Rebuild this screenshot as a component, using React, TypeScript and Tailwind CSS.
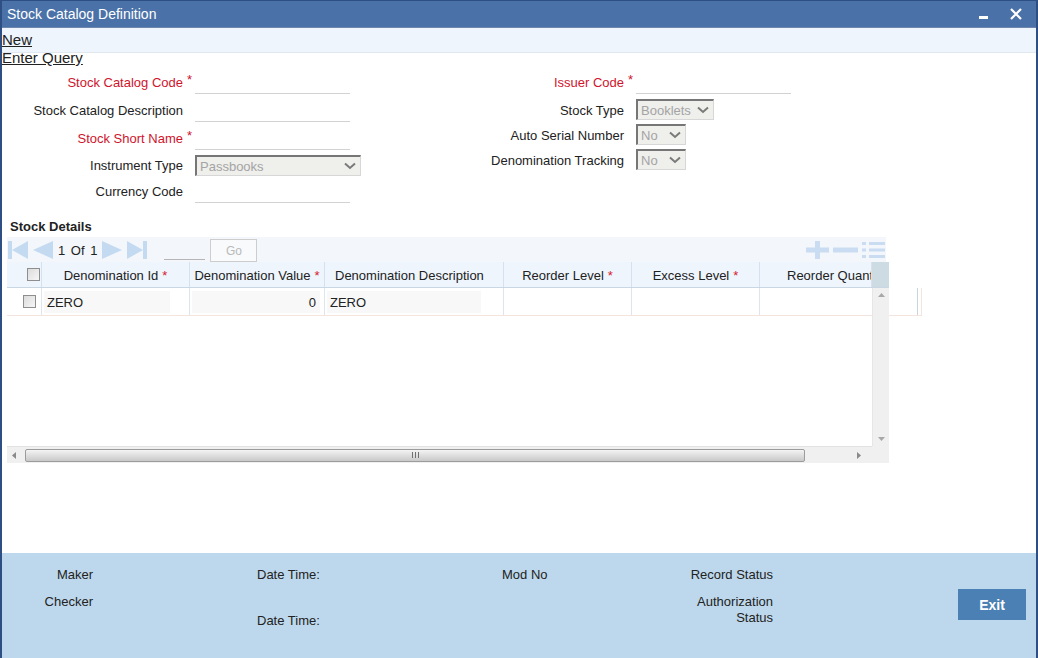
import React from 'react';

const RED = 'text-[#d0142c]';

function Star() {
  return <span className={`${RED} text-[13px] leading-none mb-[5px]`}>*</span>;
}

function Underline({ w }: { w: string }) {
  return <div className={`${w} h-[24px] border-b border-[#d2d2d2]`} />;
}

function FakeSelect({ w, value }: { w: string; value: string }) {
  return (
    <div
      className={`${w} h-[21px] flex items-center justify-between bg-[#efefec] border-t-2 border-l-2 border-t-[#767676] border-l-[#767676] border-b border-r border-b-[#d7d7d7] border-r-[#d7d7d7] pl-[3px] pr-[4px]`}
    >
      <span className="text-[13px] text-[#a4a4a4] leading-none pt-[1px]">{value}</span>
      <svg width="12" height="8" viewBox="0 0 12 8">
        <path d="M1 1.5 L6 6 L11 1.5" fill="none" stroke="#7a7a7a" strokeWidth="2" />
      </svg>
    </div>
  );
}

function Row({
  label,
  req,
  h,
  labelW,
  children,
}: {
  label: string;
  req?: boolean;
  h: string;
  labelW: string;
  children?: React.ReactNode;
}) {
  return (
    <div className={`flex items-center ${h}`}>
      <div className={`${labelW} text-right text-[13px] pt-[2px] ${req ? RED : 'text-[#222]'}`}>{label}</div>
      <div className="w-[12px] flex pl-[4px]">{req && <Star />}</div>
      {children}
    </div>
  );
}

function Checkbox() {
  return (
    <div className="w-[13px] h-[13px] border border-[#8e8e8e] bg-gradient-to-br from-[#dcdcdc] to-[#f6f6f6]" />
  );
}

function HeadCell({
  w,
  label,
  req,
  inner,
  align,
}: {
  w: string;
  label: string;
  req?: boolean;
  inner?: string;
  align?: string;
}) {
  return (
    <div className={`${w} h-full border-r border-[#d5e1ee] overflow-hidden flex items-center pt-[2px]`}>
      <div className={`${inner ?? 'w-full'} shrink-0 ${align ?? 'text-center'} whitespace-nowrap text-[13px] text-[#222]`}>
        {label}
        {req && <span className="text-[#d6202b] ml-[4px]">*</span>}
      </div>
    </div>
  );
}

function Tri({ dir }: { dir: 'l' | 'r' }) {
  return (
    <svg width="20" height="18" viewBox="0 0 20 18">
      {dir === 'l' ? <path d="M20 0 L0 9 L20 18 Z" fill="#c4daf1" /> : <path d="M0 0 L20 9 L0 18 Z" fill="#c4daf1" />}
    </svg>
  );
}

export default function App() {
  return (
    <div
      className="w-[1038px] h-[658px] flex flex-col bg-white border-x-2 border-[#2e4f84] overflow-hidden text-[#222]"
      style={{ fontFamily: '"Liberation Sans", Arial, sans-serif' }}
    >
      {/* title bar */}
      <div className="h-[28px] shrink-0 bg-[#4a72a8] border-t border-[#2e4f84] border-b border-b-[#6e88ad] flex items-center justify-between pl-[5px] pr-[14px]">
        <span className="text-white text-[14px]">Stock Catalog Definition</span>
        <div className="flex items-center gap-[22px]">
          <div className="w-[9px] h-[3px] bg-white mt-[6px]" />
          <svg width="12" height="12" viewBox="0 0 12 12">
            <path d="M1 1 L11 11 M11 1 L1 11" stroke="white" strokeWidth="2.2" />
          </svg>
        </div>
      </div>

      {/* toolbar */}
      <div className="h-[25px] shrink-0 bg-[#eef5fd] border-b border-[#e1e7ee]">
        <div className="pt-[3px] text-[15px] leading-[18px] underline">New</div>
      </div>
      <div className="-mt-[4px] text-[15px] leading-[18px] underline w-fit">Enter Query</div>

      {/* form */}
      <div className="flex pt-[1px]">
        <div className="w-[398px]">
          <Row label="Stock Catalog Code" req h="h-[28px]" labelW="w-[181px]">
            <Underline w="w-[155px]" />
          </Row>
          <Row label="Stock Catalog Description" h="h-[28px]" labelW="w-[181px]">
            <Underline w="w-[155px]" />
          </Row>
          <Row label="Stock Short Name" req h="h-[28px]" labelW="w-[181px]">
            <Underline w="w-[155px]" />
          </Row>
          <Row label="Instrument Type" h="h-[26px]" labelW="w-[181px]">
            <FakeSelect w="w-[166px]" value="Passbooks" />
          </Row>
          <Row label="Currency Code" h="h-[26px]" labelW="w-[181px]">
            <Underline w="w-[155px]" />
          </Row>
        </div>
        <div>
          <Row label="Issuer Code" req h="h-[28px]" labelW="w-[224px]">
            <Underline w="w-[155px]" />
          </Row>
          <div className="h-[1px]" />
          <Row label="Stock Type" h="h-[25px]" labelW="w-[224px]">
            <FakeSelect w="w-[78px]" value="Booklets" />
          </Row>
          <Row label="Auto Serial Number" h="h-[25px]" labelW="w-[224px]">
            <FakeSelect w="w-[50px]" value="No" />
          </Row>
          <Row label="Denomination Tracking" h="h-[25px]" labelW="w-[224px]">
            <FakeSelect w="w-[50px]" value="No" />
          </Row>
        </div>
      </div>

      {/* stock details */}
      <div className="mt-[15px] pl-[8px] text-[13px] font-bold leading-[16px]">Stock Details</div>

      <div className="mt-[2px] ml-[5px] w-[879px] h-[25px] bg-[#f3f7fc] flex items-center">
        <div className="ml-[1px] flex items-center">
          <div className="w-[4px] h-[18px] bg-[#c4daf1]" />
          <svg width="16" height="18" viewBox="0 0 16 18">
            <path d="M16 0 L0 9 L16 18 Z" fill="#c4daf1" />
          </svg>
        </div>
        <div className="ml-[5px]">
          <Tri dir="l" />
        </div>
        <span className="ml-[5px] text-[13px] pt-[3px] [word-spacing:2px]">1 Of 1</span>
        <div className="ml-[5px]">
          <Tri dir="r" />
        </div>
        <div className="ml-[5px] flex items-center">
          <svg width="16" height="18" viewBox="0 0 16 18">
            <path d="M0 0 L16 9 L0 18 Z" fill="#c4daf1" />
          </svg>
          <div className="w-[4px] h-[18px] bg-[#c4daf1]" />
        </div>
        <div className="ml-[17px] w-[41px] h-[22px] border-b border-[#b5b5b5] self-end mb-[2px]" />
        <div className="ml-[5px] w-[47px] h-[23px] self-end border border-[#cdcdcd] bg-[#f8fafc] flex items-center justify-center text-[12px] text-[#b9b9b9]">
          Go
        </div>
        <div className="ml-auto mr-[1px] flex items-center gap-[4px]">
          <svg width="23" height="18" viewBox="0 0 23 18">
            <path d="M0 6.5 H23 V11.5 H0 Z M9 0 H14 V18 H9 Z" fill="#c9dcf1" />
          </svg>
          <svg width="25" height="18" viewBox="0 0 25 18">
            <path d="M0 6.5 H25 V11.5 H0 Z" fill="#c9dcf1" />
          </svg>
          <svg width="23" height="18" viewBox="0 0 23 18">
            <g fill="#c9dcf1">
              <rect x="0" y="1" width="4" height="3" />
              <rect x="0" y="7.5" width="4" height="3" />
              <rect x="0" y="14" width="4" height="3" />
              <rect x="7" y="1" width="16" height="3" />
              <rect x="7" y="7.5" width="16" height="3" />
              <rect x="7" y="14" width="16" height="3" />
            </g>
          </svg>
        </div>
      </div>

      {/* grid */}
      <div className="ml-[5px] flex">
        <div className="w-[882px]">
          <div className="h-[26px] flex bg-[#eef5fd] border-b border-[#c9d6e4]">
            <div className="w-[35px] h-full border-r border-[#d5e1ee] flex items-center pl-[20px]">
              <Checkbox />
            </div>
            <HeadCell w="w-[148px]" label="Denomination Id" req />
            <HeadCell w="w-[135px]" label="Denomination Value" req />
            <HeadCell w="w-[179px]" label="Denomination Description" align="text-left pl-[10px]" />
            <HeadCell w="w-[128px]" label="Reorder Level" req />
            <HeadCell w="w-[128px]" label="Excess Level" req />
            <HeadCell w="w-[112px]" label="Reorder Quantity" inner="w-[153px]" />
            <div className="w-[17px] h-full bg-[#cddbe2]" />
          </div>
          <div className="flex h-[158px]">
            <div className="w-[865px] bg-white">
              <div className="h-[28px] flex border-b border-[#f4e4de]">
                <div className="w-[35px] h-full border-r border-[#dde5ee] flex items-center pl-[16px]">
                  <Checkbox />
                </div>
                <div className="w-[148px] h-full border-r border-[#dde5ee] flex items-center pl-[2px]">
                  <div className="w-[126px] h-[22px] bg-[#f8f8f8] flex items-center pl-[3px] pt-[2px] text-[13px]">ZERO</div>
                </div>
                <div className="w-[135px] h-full border-r border-[#dde5ee] flex items-center pl-[2px]">
                  <div className="w-[128px] h-[22px] bg-[#f8f8f8] flex items-center justify-end pr-[4px] pt-[2px] text-[13px]">0</div>
                </div>
                <div className="w-[179px] h-full border-r border-[#dde5ee] flex items-center pl-[2px]">
                  <div className="w-[154px] h-[22px] bg-[#f8f8f8] flex items-center pl-[3px] pt-[2px] text-[13px]">ZERO</div>
                </div>
                <div className="w-[128px] h-full border-r border-[#dde5ee]" />
                <div className="w-[128px] h-full border-r border-[#dde5ee]" />
                <div className="w-[112px] h-full" />
              </div>
            </div>
            <div className="w-[17px] bg-[#f0f0f0] border-l border-[#e6e6e6] flex flex-col items-center justify-between py-[5px]">
              <svg width="7" height="4" viewBox="0 0 7 4">
                <path d="M0 4 L3.5 0 L7 4 Z" fill="#a8a8a8" />
              </svg>
              <svg width="7" height="4" viewBox="0 0 7 4">
                <path d="M0 0 L3.5 4 L7 0 Z" fill="#a8a8a8" />
              </svg>
            </div>
          </div>
          <div className="h-[17px] flex">
            <div className="w-[865px] bg-[#f0f0f0] border-t border-[#e2e2e2] flex items-center">
              <svg className="ml-[5px]" width="4" height="7" viewBox="0 0 4 7">
                <path d="M4 0 L0 3.5 L4 7 Z" fill="#8a8a8a" />
              </svg>
              <div className="ml-[9px] w-[780px] h-[13px] rounded-[2px] border border-[#9c9c9c] bg-gradient-to-b from-[#f4f4f4] to-[#c9c9c9] flex items-center justify-center">
                <div className="flex gap-[2px]">
                  <div className="w-[1px] h-[6px] bg-[#707070]" />
                  <div className="w-[1px] h-[6px] bg-[#707070]" />
                  <div className="w-[1px] h-[6px] bg-[#707070]" />
                </div>
              </div>
              <svg className="ml-[52px]" width="4" height="7" viewBox="0 0 4 7">
                <path d="M0 0 L4 3.5 L0 7 Z" fill="#8a8a8a" />
              </svg>
            </div>
            <div className="w-[17px] bg-[#f0f0f0]" />
          </div>
        </div>
        <div className="pt-[26px]">
          <div className="w-[33px] h-[28px] border-b border-[#f4e4de] border-r border-[#c8d4e0] flex">
            <div className="w-[29px] h-full border-r border-[#c8d4e0]" />
          </div>
        </div>
      </div>

      <div className="flex-1" />

      {/* footer */}
      <div className="h-[105px] shrink-0 bg-[#bdd8ec] flex text-[13px] leading-[16px]">
        <div className="w-[91px] text-right pt-[14px]">
          <div>Maker</div>
          <div className="mt-[11px]">Checker</div>
        </div>
        <div className="ml-[164px] w-[245px] pt-[14px]">
          <div>Date Time:</div>
          <div className="mt-[30px]">Date Time:</div>
        </div>
        <div className="w-[171px] pt-[14px]">Mod No</div>
        <div className="w-[100px] text-right pt-[14px]">
          <div>Record Status</div>
          <div className="mt-[11px]">Authorization</div>
          <div>Status</div>
        </div>
        <div className="ml-[185px] pt-[36px]">
          <div className="w-[68px] h-[31px] bg-[#4a80b3] text-white text-[14px] font-bold flex items-center justify-center">
            Exit
          </div>
        </div>
      </div>
    </div>
  );
}
